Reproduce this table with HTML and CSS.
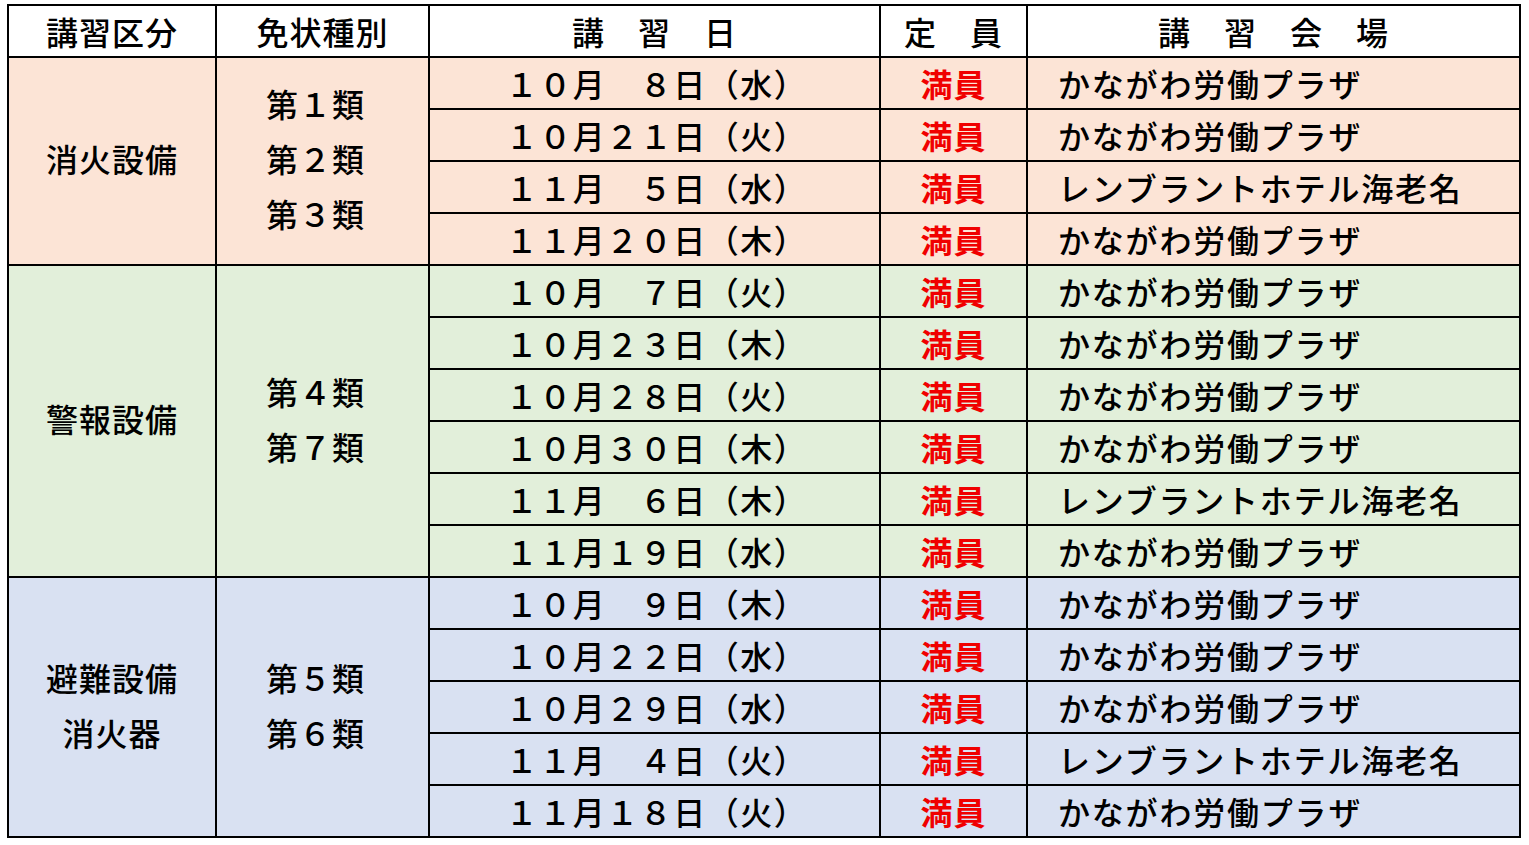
FILE: index.html
```html
<!DOCTYPE html>
<html lang="ja">
<head>
<meta charset="utf-8">
<title>講習日程</title>
<link rel="stylesheet" href="styles.css">
</head>
<body>
<div class="sheet">
  <div class="cell head">講習区分</div>
  <div class="cell head">免状種別</div>
  <div class="cell head">講　習　日</div>
  <div class="cell head">定　員</div>
  <div class="cell head">講　習　会　場</div>

  <div class="cell group g1 span4"><span>消火設備</span></div>
  <div class="cell group types g1 span4"><span>第１類</span><span>第２類</span><span>第３類</span></div>
  <div class="cell date g1">１０月　８日（水）</div><div class="cell full g1">満員</div><div class="cell venue g1">かながわ労働プラザ</div>
  <div class="cell date g1">１０月２１日（火）</div><div class="cell full g1">満員</div><div class="cell venue g1">かながわ労働プラザ</div>
  <div class="cell date g1">１１月　５日（水）</div><div class="cell full g1">満員</div><div class="cell venue g1">レンブラントホテル海老名</div>
  <div class="cell date g1">１１月２０日（木）</div><div class="cell full g1">満員</div><div class="cell venue g1">かながわ労働プラザ</div>

  <div class="cell group g2 span6"><span>警報設備</span></div>
  <div class="cell group types g2 span6"><span>第４類</span><span>第７類</span></div>
  <div class="cell date g2">１０月　７日（火）</div><div class="cell full g2">満員</div><div class="cell venue g2">かながわ労働プラザ</div>
  <div class="cell date g2">１０月２３日（木）</div><div class="cell full g2">満員</div><div class="cell venue g2">かながわ労働プラザ</div>
  <div class="cell date g2">１０月２８日（火）</div><div class="cell full g2">満員</div><div class="cell venue g2">かながわ労働プラザ</div>
  <div class="cell date g2">１０月３０日（木）</div><div class="cell full g2">満員</div><div class="cell venue g2">かながわ労働プラザ</div>
  <div class="cell date g2">１１月　６日（木）</div><div class="cell full g2">満員</div><div class="cell venue g2">レンブラントホテル海老名</div>
  <div class="cell date g2">１１月１９日（水）</div><div class="cell full g2">満員</div><div class="cell venue g2">かながわ労働プラザ</div>

  <div class="cell group g3 span5"><span>避難設備</span><span>消火器</span></div>
  <div class="cell group types g3 span5"><span>第５類</span><span>第６類</span></div>
  <div class="cell date g3">１０月　９日（木）</div><div class="cell full g3">満員</div><div class="cell venue g3">かながわ労働プラザ</div>
  <div class="cell date g3">１０月２２日（水）</div><div class="cell full g3">満員</div><div class="cell venue g3">かながわ労働プラザ</div>
  <div class="cell date g3">１０月２９日（水）</div><div class="cell full g3">満員</div><div class="cell venue g3">かながわ労働プラザ</div>
  <div class="cell date g3">１１月　４日（火）</div><div class="cell full g3">満員</div><div class="cell venue g3">レンブラントホテル海老名</div>
  <div class="cell date g3">１１月１８日（火）</div><div class="cell full g3">満員</div><div class="cell venue g3">かながわ労働プラザ</div>
</div>
</body>
</html>
```

FILE: styles.css
```css
html, body {
  margin: 0;
  padding: 0;
  background: #ffffff;
}

body {
  font-family: "Noto Sans CJK JP", "Noto Sans", sans-serif;
  color: #000;
}

.sheet {
  display: inline-grid;
  grid-template-columns: 208px 213px 451px 147px 493px;
  grid-auto-rows: 52px;
  margin: 4px 0 0 7px;
  border-left: 2px solid #000;
  border-top: 2px solid #000;
}

.cell {
  box-sizing: border-box;
  border-right: 2px solid #000;
  border-bottom: 2px solid #000;
  display: flex;
  align-items: center;
  justify-content: center;
  font-size: 32px;
  letter-spacing: 1px;
  font-weight: 500;
  line-height: 1;
  white-space: nowrap;
}

.head {
  background: #ffffff;
}

.g1 { background: #fce4d6; }
.g2 { background: #e2efda; }
.g3 { background: #d9e1f2; }

.span4 { grid-row: span 4; }
.span5 { grid-row: span 5; }
.span6 { grid-row: span 6; }

.group {
  flex-direction: column;
  line-height: 55px;
  padding-bottom: 5px;
}

.types {
  padding-right: 14px;
}

.date {
  letter-spacing: 1.5px;
  padding-left: 4px;
}

.full {
  color: #f00000;
  font-weight: 700;
}

.venue {
  justify-content: flex-start;
  padding-left: 30px;
  letter-spacing: 1.8px;
}
```
